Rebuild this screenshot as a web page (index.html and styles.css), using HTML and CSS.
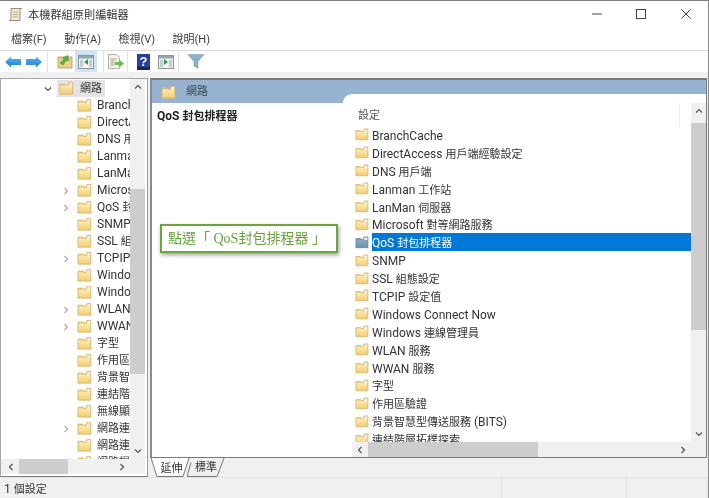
FILE: index.html
```html
<!DOCTYPE html>
<html lang="zh-Hant">
<head>
<meta charset="utf-8">
<title>本機群組原則編輯器</title>
<link rel="stylesheet" href="styles.css">
</head>
<body>
<svg class="defs" width="0" height="0" aria-hidden="true">
  <defs>
    <linearGradient id="fg" x1="0" y1="0" x2="0" y2="1">
      <stop offset="0" stop-color="#fcebb0"/>
      <stop offset="1" stop-color="#f2cd74"/>
    </linearGradient>
    <linearGradient id="fgs" x1="0" y1="0" x2="0" y2="1">
      <stop offset="0" stop-color="#8aa9bf"/>
      <stop offset="1" stop-color="#6f93ad"/>
    </linearGradient>
    <linearGradient id="arrowg" x1="0" y1="0" x2="0" y2="1">
      <stop offset="0" stop-color="#5cb4f0"/>
      <stop offset="1" stop-color="#1c7fd8"/>
    </linearGradient>
    <symbol id="folder" viewBox="0 0 16 15">
      <path d="M1 2.500h5.500l1 1H9l1-2.500h5v12.500H1z" fill="var(--fb)"/>
      <path d="M10.300 1.500h4.200v3h-5z" fill="#f4f1e6"/>
      <path d="M1.500 4.500h13v8.800h-13z" fill="var(--ff)"/>
      <path d="M1 13.500V3h5.500l1 1.200H10l.5-3h4.200v12.300z" fill="none" stroke="var(--fs)" stroke-width=".8"/>
    </symbol>
    <symbol id="chev" viewBox="0 0 8 8">
      <path d="M1 2.500l3 3 3-3" fill="none" stroke="currentColor" stroke-width="1.200"/>
    </symbol>
    <symbol id="pane" viewBox="0 0 16 14">
      <rect x=".5" y=".5" width="15" height="13" fill="#eef0f0" stroke="#8f9499"/>
      <rect x="1" y="1" width="14" height="2.500" fill="#98a4ae"/>
      <rect x="2" y="5" width="3" height="7" fill="#c5ccd2"/>
      <rect x="11" y="5" width="3" height="7" fill="#c5ccd2"/>
      <rect x="6" y="5" width="4" height="7" fill="#fff"/>
    </symbol>
  </defs>
</svg>

<div class="window">
  <header class="titlebar">
    <div class="title-left">
      <svg class="app-icon" viewBox="0 0 15 16" width="15" height="16">
        <path d="M3 1.500h10.500l-1.500 2v10H1.500l1.500-2z" fill="#efe7cf" stroke="#8d8672" stroke-width=".9"/>
        <path d="M5 5h5M5 7.500h5M5 10h5" stroke="#a9a28c" stroke-width=".8"/>
      </svg>
      <span class="title-text">本機群組原則編輯器</span>
    </div>
    <div class="win-controls">
      <span class="win-btn"><svg viewBox="0 0 10 10" width="10" height="10"><path d="M0 5h10" stroke="#444" stroke-width="1"/></svg></span>
      <span class="win-btn"><svg viewBox="0 0 10 10" width="10" height="10"><rect x=".5" y=".5" width="9" height="9" fill="none" stroke="#444"/></svg></span>
      <span class="win-btn"><svg viewBox="0 0 10 10" width="10" height="10"><path d="M.3.300l9.400 9.400M9.700.300L.3 9.700" stroke="#444" stroke-width="1"/></svg></span>
    </div>
  </header>

  <nav class="menubar">
    <span>檔案(F)</span><span>動作(A)</span><span>檢視(V)</span><span>說明(H)</span>
  </nav>

  <div class="toolbar">
    <span class="tool tool-nav"><svg viewBox="0 0 16 12" width="16" height="12"><path d="M0 6l6-5.500V3h10v6H6v2.500z" fill="url(#arrowg)"/></svg></span>
    <span class="tool tool-nav"><svg viewBox="0 0 16 12" width="16" height="12"><path d="M16 6l-6-5.500V3H0v6h10v2.500z" fill="url(#arrowg)"/></svg></span>
    <span class="tool-sep sep-a"></span>
    <span class="tool"><svg viewBox="0 0 16 15" width="16" height="15"><path d="M1 3h14v11H1z" fill="#ecd08c" stroke="#b49656" stroke-width=".8"/><path d="M3 9l4-3.500L5.500 4 11 1.500 11.500 7 9.500 6 6 11z" fill="#5fb23f" stroke="#3d8a2a" stroke-width=".5"/></svg></span>
    <span class="tool tool-active"><svg width="16" height="14"><use href="#pane"/></svg><svg class="pane-arrow" viewBox="0 0 4 6" width="4" height="6"><path d="M4 0v6L0 3z" fill="#2ea043"/></svg></span>
    <span class="tool-sep sep-b"></span>
    <span class="tool"><svg viewBox="0 0 17 15" width="17" height="15"><path d="M1.500.500h8l3 3v11h-11z" fill="#f6f1e2" stroke="#a39f92" stroke-width=".8"/><path d="M3.500 5h6M3.500 7h4M3.500 9h4M3.500 11h4" stroke="#8d8a80" stroke-width=".8"/><path d="M8 8h4V5.500L17 9.500l-5 4V11H8z" fill="#62c24a"/></svg></span>
    <span class="tool-sep sep-c"></span>
    <span class="tool tool-help"><svg viewBox="0 0 13 16" width="13" height="16"><path d="M0 0h13v16H0z" fill="#27409a"/><path d="M0 13h13v3H0z" fill="#16285f"/><text x="6.500" y="12" class="help-q">?</text></svg></span>
    <span class="tool tool-pane2"><svg width="16" height="14"><use href="#pane"/></svg><svg class="pane-arrow" viewBox="0 0 4 6" width="4" height="6"><path d="M0 0v6l4-3z" fill="#2ea043"/></svg></span>
    <span class="tool-sep sep-d"></span>
    <span class="tool"><svg viewBox="0 0 16 15" width="16" height="15"><path d="M0 .500h16L10 7.500v7L6 12V7.500z" fill="#8fb0c8" stroke="#6f8da3" stroke-width=".5"/></svg></span>
  </div>

  <main class="workspace">
    <aside class="tree-pane">
      <div class="tree-top">
        <div class="tree">
          <div class="tree-root">
            <svg class="chev tree-expander"><use href="#chev"/></svg>
            <span class="tree-root-sel"><svg class="folder"><use href="#folder"/></svg><b class="c">網路</b></span>
          </div>
          <div class="tree-row"><i></i><svg class="folder"><use href="#folder"/></svg><span>BranchCache</span></div>
          <div class="tree-row"><i></i><svg class="folder"><use href="#folder"/></svg><span>DirectAccess <b class="c">用戶端經驗設定</b></span></div>
          <div class="tree-row"><i></i><svg class="folder"><use href="#folder"/></svg><span>DNS <b class="c">用戶端</b></span></div>
          <div class="tree-row"><i></i><svg class="folder"><use href="#folder"/></svg><span>Lanman <b class="c">工作站</b></span></div>
          <div class="tree-row"><i></i><svg class="folder"><use href="#folder"/></svg><span>LanMan <b class="c">伺服器</b></span></div>
          <div class="tree-row"><i><svg class="chev rot-r"><use href="#chev"/></svg></i><svg class="folder"><use href="#folder"/></svg><span>Microsoft <b class="c">對等網路服務</b></span></div>
          <div class="tree-row"><i><svg class="chev rot-r"><use href="#chev"/></svg></i><svg class="folder"><use href="#folder"/></svg><span>QoS <b class="c">封包排程器</b></span></div>
          <div class="tree-row"><i></i><svg class="folder"><use href="#folder"/></svg><span>SNMP</span></div>
          <div class="tree-row"><i></i><svg class="folder"><use href="#folder"/></svg><span>SSL <b class="c">組態設定</b></span></div>
          <div class="tree-row"><i><svg class="chev rot-r"><use href="#chev"/></svg></i><svg class="folder"><use href="#folder"/></svg><span>TCPIP <b class="c">設定值</b></span></div>
          <div class="tree-row"><i></i><svg class="folder"><use href="#folder"/></svg><span>Windows Connect Now</span></div>
          <div class="tree-row"><i></i><svg class="folder"><use href="#folder"/></svg><span>Windows <b class="c">連線管理員</b></span></div>
          <div class="tree-row"><i><svg class="chev rot-r"><use href="#chev"/></svg></i><svg class="folder"><use href="#folder"/></svg><span>WLAN <b class="c">服務</b></span></div>
          <div class="tree-row"><i><svg class="chev rot-r"><use href="#chev"/></svg></i><svg class="folder"><use href="#folder"/></svg><span>WWAN <b class="c">服務</b></span></div>
          <div class="tree-row"><i></i><svg class="folder"><use href="#folder"/></svg><span><b class="c">字型</b></span></div>
          <div class="tree-row"><i></i><svg class="folder"><use href="#folder"/></svg><span><b class="c">作用區驗證</b></span></div>
          <div class="tree-row"><i></i><svg class="folder"><use href="#folder"/></svg><span><b class="c">背景智慧型傳送服務</b> (BITS)</span></div>
          <div class="tree-row"><i></i><svg class="folder"><use href="#folder"/></svg><span><b class="c">連結階層拓樸探索</b></span></div>
          <div class="tree-row"><i></i><svg class="folder"><use href="#folder"/></svg><span><b class="c">無線顯示器</b></span></div>
          <div class="tree-row"><i><svg class="chev rot-r"><use href="#chev"/></svg></i><svg class="folder"><use href="#folder"/></svg><span><b class="c">網路連線</b></span></div>
          <div class="tree-row"><i></i><svg class="folder"><use href="#folder"/></svg><span><b class="c">網路連線狀態</b></span></div>
          <div class="tree-row"><i></i><svg class="folder"><use href="#folder"/></svg><span><b class="c">網路提供者</b></span></div>
        </div>
        <div class="vscroll tree-vscroll">
          <svg class="chev rot-u"><use href="#chev"/></svg>
          <div class="vtrack"><div class="vthumb tree-vthumb"></div></div>
          <svg class="chev"><use href="#chev"/></svg>
        </div>
      </div>
      <div class="tree-bottom">
        <div class="hscroll tree-hscroll">
          <svg class="chev rot-l"><use href="#chev"/></svg>
          <div class="htrack"><div class="hthumb tree-hthumb"></div></div>
          <svg class="chev rot-r"><use href="#chev"/></svg>
        </div>
        <div class="corner"></div>
      </div>
    </aside>

    <section class="detail-col">
      <div class="detail-pane">
        <div class="desc-col">
          <div class="detail-head"><svg class="folder"><use href="#folder"/></svg><b class="c">網路</b></div>
          <div class="desc-title">QoS <b class="c">封包排程器</b></div>
        </div>
        <div class="list-col">
          <div class="sheet">
            <div class="sheet-main">
              <div class="list-head"><b class="c">設定</b></div>
              <div class="list-rows">
                <div class="list-row"><svg class="folder"><use href="#folder"/></svg><span>BranchCache</span></div>
                <div class="list-row"><svg class="folder"><use href="#folder"/></svg><span>DirectAccess <b class="c">用戶端經驗設定</b></span></div>
                <div class="list-row"><svg class="folder"><use href="#folder"/></svg><span>DNS <b class="c">用戶端</b></span></div>
                <div class="list-row"><svg class="folder"><use href="#folder"/></svg><span>Lanman <b class="c">工作站</b></span></div>
                <div class="list-row"><svg class="folder"><use href="#folder"/></svg><span>LanMan <b class="c">伺服器</b></span></div>
                <div class="list-row"><svg class="folder"><use href="#folder"/></svg><span>Microsoft <b class="c">對等網路服務</b></span></div>
                <div class="list-row is-selected"><svg class="folder"><use href="#folder"/></svg><span>QoS <b class="c">封包排程器</b></span></div>
                <div class="list-row"><svg class="folder"><use href="#folder"/></svg><span>SNMP</span></div>
                <div class="list-row"><svg class="folder"><use href="#folder"/></svg><span>SSL <b class="c">組態設定</b></span></div>
                <div class="list-row"><svg class="folder"><use href="#folder"/></svg><span>TCPIP <b class="c">設定值</b></span></div>
                <div class="list-row"><svg class="folder"><use href="#folder"/></svg><span>Windows Connect Now</span></div>
                <div class="list-row"><svg class="folder"><use href="#folder"/></svg><span>Windows <b class="c">連線管理員</b></span></div>
                <div class="list-row"><svg class="folder"><use href="#folder"/></svg><span>WLAN <b class="c">服務</b></span></div>
                <div class="list-row"><svg class="folder"><use href="#folder"/></svg><span>WWAN <b class="c">服務</b></span></div>
                <div class="list-row"><svg class="folder"><use href="#folder"/></svg><span><b class="c">字型</b></span></div>
                <div class="list-row"><svg class="folder"><use href="#folder"/></svg><span><b class="c">作用區驗證</b></span></div>
                <div class="list-row"><svg class="folder"><use href="#folder"/></svg><span><b class="c">背景智慧型傳送服務</b> (BITS)</span></div>
                <div class="list-row"><svg class="folder"><use href="#folder"/></svg><span><b class="c">連結階層拓樸探索</b></span></div>
              </div>
            </div>
            <div class="vscroll list-vscroll">
              <svg class="chev rot-u"><use href="#chev"/></svg>
              <div class="vtrack"><div class="vthumb list-vthumb"></div></div>
              <svg class="chev"><use href="#chev"/></svg>
            </div>
            <div class="hscroll list-hscroll">
              <svg class="chev rot-l"><use href="#chev"/></svg>
              <div class="htrack"><div class="hthumb list-hthumb"></div></div>
              <svg class="chev rot-r"><use href="#chev"/></svg>
            </div>
            <div class="corner"></div>
          </div>
        </div>
        <div class="callout">點選「 QoS封包排程器 」</div>
      </div>
      <div class="tabs">
        <span class="tab tab-active">
          <svg class="tab-shape" viewBox="0 0 40 19" width="40" height="19"><path d="M1 0l6 18.500h26L39 0" fill="#fff" stroke="#777"/></svg>
          <span class="tab-label"><b class="c">延伸</b></span>
        </span>
        <span class="tab tab-idle">
          <svg class="tab-shape" viewBox="0 0 38 19" width="38" height="19"><path d="M0 18.500l4-14M0 18.500h30L37 0" fill="none" stroke="#777"/></svg>
          <span class="tab-label"><b class="c">標準</b></span>
        </span>
      </div>
    </section>
  </main>

  <footer class="statusbar">
    <span class="status-main">1 <b class="c">個設定</b></span>
    <span class="status-cell status-cell-a"></span>
    <span class="status-cell status-cell-b"></span>
  </footer>
</div>
</body>
</html>
```

FILE: styles.css
```css
* { box-sizing: border-box; }
:root {
  --ff: url(#fg);
  --fb: #ecd48d;
  --fs: #d3b468;
}
html, body { margin: 0; padding: 0; background: #f0f0f0; }
body { width: 709px; height: 498px; overflow: hidden; }

.defs { position: absolute; }

.window {
  width: 709px;
  height: 498px;
  display: flex;
  flex-direction: column;
  overflow: hidden;
  background: #f0f0f0;
  border-top: 1px solid #7f7f7f;
  border-right: 1px solid #8a8a8a;
  color: #222;
  font: 12px/1.2 Roboto, "Noto Sans CJK TC", sans-serif;
  filter: blur(.45px);
}

svg { display: block; flex: none; }

/* CJK runs are set a little smaller than the Latin text, as in the reference */
.c { font-size: 11px; font-weight: inherit; }

/* title bar */
.titlebar {
  height: 26px;
  flex: none;
  background: #fff;
  display: flex;
  align-items: center;
  justify-content: space-between;
}
.title-left { display: flex; align-items: center; padding: 2px 0 0 8px; gap: 5px; }
.title-text { font-size: 11.200px; color: #333; padding-top: 1px; }
.win-controls { display: flex; margin-top: -1px; }
.win-btn {
  width: 44.500px;
  height: 26px;
  display: flex;
  align-items: center;
  justify-content: center;
}

/* menu */
.menubar {
  height: 24px;
  flex: none;
  background: #fff;
  border-bottom: 1px solid #dcdcdc;
  padding: 2px 0 0 11px;
  display: flex;
  align-items: center;
  gap: 17.500px;
  font-size: 11px;
  color: #3c3c3c;
}

/* toolbar */
.toolbar {
  height: 21px;
  flex: none;
  margin-bottom: 6px;
  background: #fff;
  display: flex;
  align-items: center;
  padding-left: 5px;
}
.tool { position: relative; display: flex; align-items: center; justify-content: center; height: 21px; }
.tool-nav { width: 16px; margin-right: 5px; }
.tool-nav + .tool-nav { margin-right: 0; }
.tool-sep { width: 1px; height: 21px; background: #e2e2e2; }
.sep-a { margin: 0 9px 0 5px; }
.sep-b { margin: 0 3px 0 6px; }
.sep-c { margin: 0 9px 0 3px; }
.sep-d { margin: 0 9px 0 4px; }
.tool-active { width: 22px; margin-left: 2px; background: #cce4f7; }
.tool-help { width: 13px; margin-right: 8px; }
.tool-pane2 { width: 16px; }
.pane-arrow { position: absolute; left: 50%; top: 8px; margin-left: -2px; }
.help-q { font: bold 13px "Liberation Sans", sans-serif; fill: #fff; text-anchor: middle; }

/* workspace */
.workspace {
  height: 399px;
  flex: none;
  display: flex;
  gap: 2px;
  background: #f0f0f0;
}

/* tree pane */
.tree-pane {
  width: 148px;
  flex: none;
  display: flex;
  flex-direction: column;
  background: #fff;
  border: 1px solid #a8a8a8;
  border-right-color: #9a9a9a;
  border-bottom-color: #808080;
}
.tree-top { flex: 1; min-height: 0; display: flex; padding-right: 2px; }
.tree { width: 129px; overflow: hidden; padding-top: 1px; color: #333; }
.tree-root { height: 17px; display: flex; align-items: center; }
.tree-expander { width: 8px; height: 8px; margin-left: 43px; margin-right: 5px; color: #666; }
.tree-root-sel {
  width: 48px;
  height: 17px;
  background: #e3e3e3;
  display: flex;
  align-items: center;
  padding-left: 2px;
  gap: 6px;
}
.tree-row { height: 17px; display: flex; align-items: center; white-space: nowrap; padding-left: 61px; }
.tree-row i { width: 15px; flex: none; display: block; margin-left: -1px; }
.tree-row .folder { margin-right: 5px; margin-left: 1px; }
.tree-row .chev { color: #aaa; margin-left: 1px; }
.tree-bottom { height: 17px; flex: none; display: flex; padding: 0 2px 2px 0; }

.folder { width: 15px; height: 15px; }
.chev { width: 8px; height: 8px; color: #555; }
.rot-r { transform: rotate(-90deg); }
.rot-l { transform: rotate(90deg); }
.rot-u { transform: rotate(180deg); }

/* scrollbars */
.vscroll {
  width: 15px;
  flex: none;
  background: #f0f0f0;
  display: flex;
  flex-direction: column;
  align-items: center;
}
.vscroll > .chev { margin: 4px 0; height: 8px; }
.vtrack { flex: 1; width: 15px; min-height: 0; }
.vthumb { width: 15px; background: #cdcdcd; }
.hscroll {
  height: 15px;
  background: #f0f0f0;
  display: flex;
  align-items: center;
}
.hscroll > .chev { margin: 0 4px; }
.htrack { flex: 1; height: 15px; min-width: 0; }
.hthumb { height: 15px; background: #cdcdcd; }
.corner { width: 15px; height: 15px; background: #f0f0f0; flex: none; }

.tree-vscroll { height: 100%; }
.tree-vthumb { height: 185px; margin-top: 94px; }
.tree-hscroll { width: 129px; padding-left: 2px; }
.tree-hthumb { width: 49px; }

/* detail */
.detail-col { flex: 1; min-width: 0; display: flex; flex-direction: column; padding-right: 1px; }
.detail-pane {
  position: relative;
  height: 380px;
  flex: none;
  display: flex;
  background: #fff;
  border-top: 2px solid #7b7b7b;
  border-left: 2px solid #8a8a8a;
  border-right: 1px solid #7b7b7b;
  border-bottom: 1px solid #7b7b7b;
}
.desc-col { width: 191px; flex: none; display: flex; flex-direction: column; }
.detail-head {
  height: 23px;
  flex: none;
  background: #98b3d1;
  display: flex;
  align-items: center;
  padding: 1px 0 0 9px;
  gap: 10px;
  color: #3b4756;
}
.desc-title { font-weight: 700; padding: 6px 0 0 5px; color: #222; }
.list-col { flex: 1; min-width: 0; background: #98b3d1; padding-top: 14px; display: flex; }
.sheet {
  flex: 1;
  min-width: 0;
  background: #fff;
  border-top-left-radius: 9px;
  display: grid;
  grid-template-columns: 1fr 15px;
  grid-template-rows: 1fr 15px;
  padding-top: 9px;
}
.sheet-main { min-width: 0; min-height: 0; overflow: hidden; padding-left: 12px; color: #333; }
.list-head {
  height: 23px;
  display: flex;
  align-items: center;
  padding: 3px 0 0 3px;
  color: #555;
  border-right: 1px solid #eee;
  margin-right: 11px;
}
.list-rows { display: flex; flex-direction: column; }
.list-row { height: 17.900px; flex: none; display: flex; align-items: center; white-space: nowrap; gap: 3px; }
.list-row .folder { width: 14px; }
.list-row span { flex: 1; height: 17.900px; line-height: 21px; }
.is-selected { --ff: url(#fgs); --fb: #7f9db3; --fs: #6c8aa0; }
.is-selected span { background: #0078d7; color: #fff; }
.list-vscroll { grid-column: 2; grid-row: 1; }
.list-vthumb { height: 207px; margin-top: 4px; }
.list-hscroll { grid-column: 1; grid-row: 2; margin-left: 9px; }
.list-hthumb { width: 170px; }

.callout {
  position: absolute;
  left: 8px;
  top: 144px;
  width: 178px;
  height: 29px;
  background: #fff;
  border: 2px solid #6ba53c;
  box-shadow: 1px 2px 4px rgba(0, 0, 0, .4);
  color: #68a13b;
  font: 14px/25px "Liberation Serif", "Noto Sans CJK TC", serif;
  padding-left: 6px;
  white-space: nowrap;
}

/* tabs */
.tabs { height: 19px; flex: none; display: flex; }
.tab { position: relative; width: 38px; height: 19px; display: block; }
.tab-active { width: 40px; z-index: 1; }
.tab-idle { margin-left: -3px; }
.tab-shape { position: absolute; left: 0; top: 0; }
.tab-label { position: absolute; left: 0; right: 0; top: 3px; padding-left: 3px; text-align: center; color: #333; }
.tab-idle .tab-label { padding-left: 0; top: 2px; }

/* status */
.statusbar {
  flex: 1;
  min-height: 0;
  display: flex;
  border-top: 1px solid #e2e2e2;
  align-items: stretch;
  color: #333;
}
.status-main { width: 501px; padding: 4px 0 0 4px; }
.status-cell { border-left: 1px solid #e2e2e2; }
.status-cell-a { width: 125px; }
.status-cell-b { width: 81px; border-right: 1px solid #e2e2e2; }
```
